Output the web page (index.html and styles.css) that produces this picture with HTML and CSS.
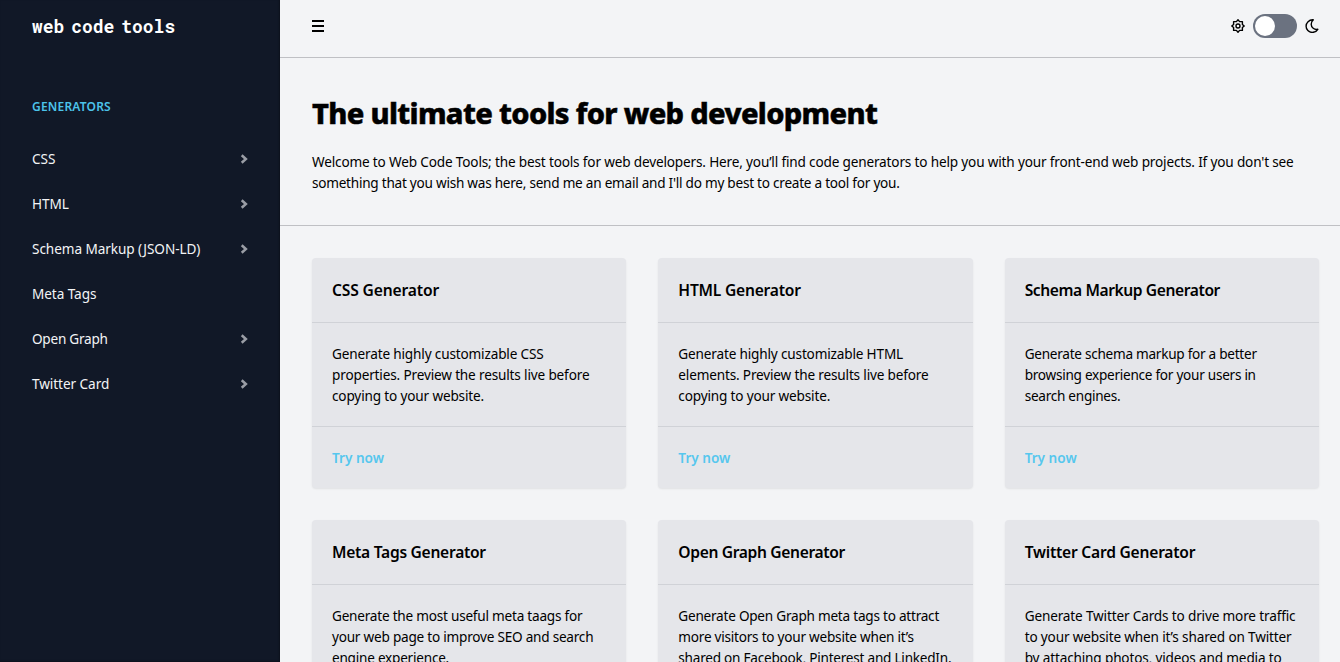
FILE: index.html
```html
<!DOCTYPE html>
<html lang="en">
<head>
<meta charset="utf-8">
<title>Web Code Tools</title>
<link rel="stylesheet" href="styles.css">
</head>
<body>
<div class="app">
  <aside class="sidebar">
    <a class="logo">web code tools</a>
    <h2 class="nav-title">GENERATORS</h2>
    <nav class="nav">
      <a class="nav-item"><span>CSS</span><svg class="chevron" viewBox="0 0 8 10"><path d="M1.7 1.2 5.9 5 1.7 8.8"/></svg></a>
      <a class="nav-item"><span>HTML</span><svg class="chevron" viewBox="0 0 8 10"><path d="M1.7 1.2 5.9 5 1.7 8.8"/></svg></a>
      <a class="nav-item"><span>Schema Markup (JSON-LD)</span><svg class="chevron" viewBox="0 0 8 10"><path d="M1.7 1.2 5.9 5 1.7 8.8"/></svg></a>
      <a class="nav-item"><span>Meta Tags</span></a>
      <a class="nav-item tight"><span>Open Graph</span><svg class="chevron" viewBox="0 0 8 10"><path d="M1.7 1.2 5.9 5 1.7 8.8"/></svg></a>
      <a class="nav-item"><span>Twitter Card</span><svg class="chevron" viewBox="0 0 8 10"><path d="M1.7 1.2 5.9 5 1.7 8.8"/></svg></a>
    </nav>
  </aside>
  <main class="main">
    <header class="topbar">
      <svg class="menu" viewBox="0 0 12 12"><path d="M0 1h12M0 6h12M0 11h12"/></svg>
      <div class="theme">
        <svg class="sun" viewBox="0 0 14 14"><path d="M7 .8 8.6 2.6 11.4 2.6 11.4 5.4 13.2 7 11.4 8.6 11.4 11.4 8.6 11.4 7 13.2 5.4 11.4 2.6 11.4 2.6 8.6 .8 7 2.6 5.4 2.6 2.6 5.4 2.6Z"/><circle cx="7" cy="7" r="2"/></svg>
        <span class="switch"><span class="knob"></span></span>
        <svg class="moon" viewBox="0 0 14 14"><path d="M7.7.8C4.1.9 1.1 3.7 1.1 7.2 1.1 10.7 3.8 13.4 7.2 13.4 9.5 13.4 11.6 12.3 12.8 10.3 9.3 11 6.2 8.6 6.2 5.3 6.2 3.3 6.8 1.8 8.3.8Z"/></svg>
      </div>
    </header>
    <section class="hero">
      <h1>The ultimate tools for web development</h1>
      <p><span class="lead">Welcome to Web Code Tools; the best tools for web developers. Here, you’ll find code generators to help you with your front-end web projects. If you don't see</span><br>something that you wish was here, send me an email and I'll do my best to create a tool for you.</p>
    </section>
    <section class="cards">
      <article class="card card-css"><h3>CSS Generator</h3><p>Generate highly customizable CSS<br>properties. Preview the results live before<br>copying to your website.</p><a>Try now</a></article>
      <article class="card card-html"><h3>HTML Generator</h3><p>Generate highly customizable HTML<br>elements. Preview the results live before<br>copying to your website.</p><a>Try now</a></article>
      <article class="card card-schema"><h3>Schema Markup Generator</h3><p>Generate schema markup for a better<br>browsing experience for your users in<br>search engines.</p><a>Try now</a></article>
      <article class="card card-meta"><h3>Meta Tags Generator</h3><p>Generate the most useful meta taags for<br>your web page to improve SEO and search<br>engine experience.</p><a>Try now</a></article>
      <article class="card card-graph"><h3>Open Graph Generator</h3><p>Generate Open Graph meta tags to attract<br>more visitors to your website when it’s<br>shared on Facebook, Pinterest and LinkedIn.</p><a>Try now</a></article>
      <article class="card card-twitter"><h3>Twitter Card Generator</h3><p>Generate Twitter Cards to drive more traffic<br>to your website when it’s shared on Twitter<br>by attaching photos, videos and media to</p><a>Try now</a></article>
    </section>
  </main>
</div>
</body>
</html>
```
FILE: styles.css
```css
* { box-sizing: border-box; margin: 0; }
body { font: 13.6px/21px "Noto Sans", sans-serif; color: #000; background: #f3f4f6; }
.app { display: flex; height: 662px; overflow: hidden; }
.sidebar { flex: 0 0 280px; padding: 16px 32px; background: #111827; color: #f3f4f6; box-shadow: inset -1px -1px 2px rgba(0,0,0,.3); }
.logo { display: block; color: #fff; font: bold 18px/20px "Roboto Mono", "Liberation Mono", monospace; word-spacing: -4px; white-space: nowrap; }
.nav-title { margin-top: 60px; font: 600 12px/21px "Noto Sans", sans-serif; letter-spacing: .2px; color: #4cc3ea; }
.nav { margin-top: 19px; }
.nav-item { display: flex; align-items: center; justify-content: space-between; height: 45px; letter-spacing: -.07px; white-space: nowrap; }
.tight { letter-spacing: -.25px; }
.chevron { width: 8px; height: 10px; margin-right: .5px; fill: none; stroke: #9a9da5; stroke-width: 2.5; }
.main { flex: 1; min-width: 0; }
.topbar { display: flex; justify-content: space-between; height: 58px; padding: 14px 21px 19px 32px; border-bottom: 1px solid #bfc0c4; }
.menu { width: 12px; height: 12px; margin-top: 6px; stroke: #000; stroke-width: 1.8; }
.theme { display: flex; align-items: center; gap: 8px; height: 24px; }
.sun, .moon { width: 14px; height: 14px; fill: none; stroke: #000; stroke-width: 1.4; stroke-linejoin: round; }
.switch { width: 44px; height: 24px; padding: 2px; border-radius: 12px; background: #6b7280; }
.knob { display: block; width: 20px; height: 20px; border-radius: 50%; background: #fff; }
.hero { height: 168px; padding: 31px 32px; border-bottom: 1px solid #bfc0c4; white-space: nowrap; }
h1 { font-size: 29px; line-height: 48px; font-weight: 800; letter-spacing: -.66px; -webkit-text-stroke: .5px #000; }
.hero p { margin-top: 14px; letter-spacing: -.25px; }
.lead { letter-spacing: -.167px; }
.cards { display: grid; grid-template-columns: repeat(3, 1fr); gap: 32px; padding: 32px 21px 32px 32px; }
.card { min-width: 0; border-radius: 4px; background: #e5e6ea; box-shadow: 0 1px 2px rgba(0,0,0,.08); white-space: nowrap; }
.card h3 { height: 65px; padding: 20px; font-size: 15.6px; line-height: 24px; font-weight: 600; border-bottom: 1px solid #d0d2d7; }
.card p { height: 104px; padding: 20px; border-bottom: 1px solid #d0d2d7; }
.card a { display: block; height: 61px; padding: 20px; color: #56c7ee; font-weight: 600; }
.card-css h3 { letter-spacing: -.14px; }
.card-css p { letter-spacing: -.16px; }
.card-html h3 { letter-spacing: -.22px; }
.card-html p { letter-spacing: -.17px; }
.card-schema h3 { letter-spacing: -.41px; }
.card-schema p { letter-spacing: -.27px; }
.card-meta h3 { letter-spacing: -.28px; }
.card-meta p { letter-spacing: -.23px; }
.card-graph h3 { letter-spacing: -.35px; }
.card-graph p { letter-spacing: -.24px; }
.card-twitter h3 { letter-spacing: -.23px; }
.card-twitter p { letter-spacing: -.16px; }
```
